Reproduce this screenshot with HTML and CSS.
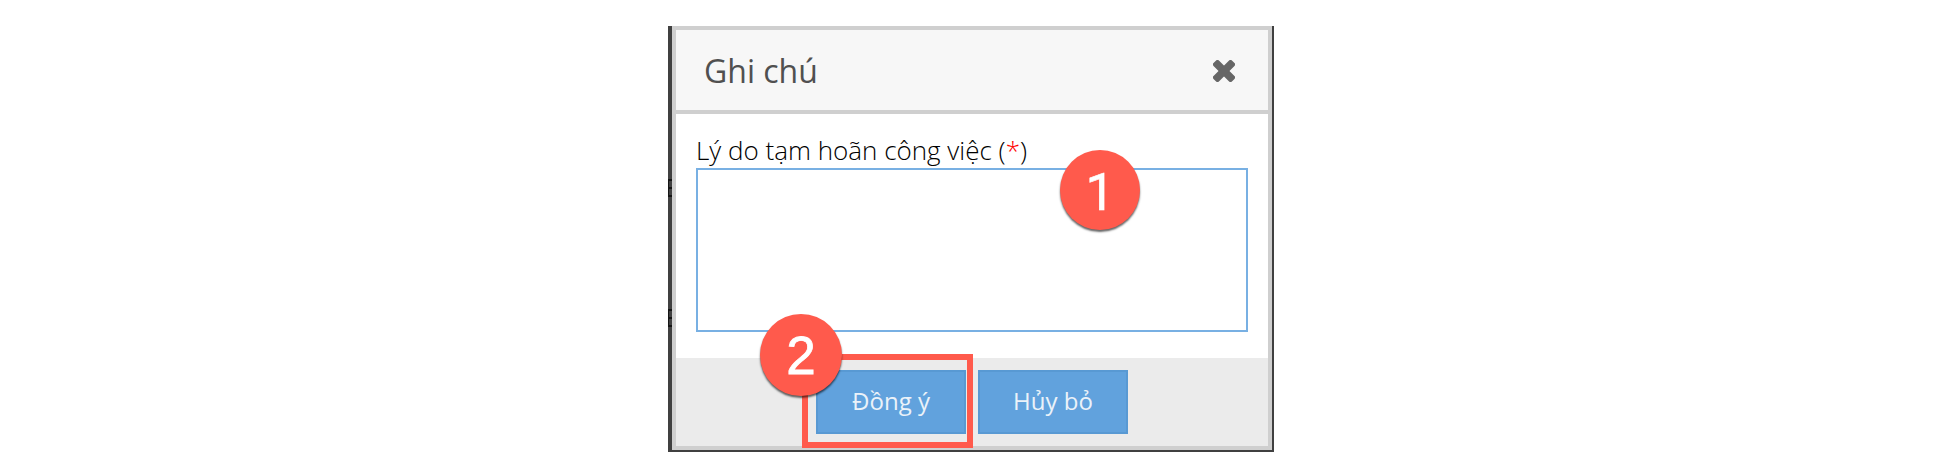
FILE: index.html
```html
<!DOCTYPE html>
<html lang="vi">
<head>
<meta charset="utf-8">
<title>Ghi chú</title>
<link rel="stylesheet" href="styles.css">
</head>
<body>
<div class="backdrop">
  <i class="notch notch-top"></i>
  <i class="notch notch-bottom"></i>
  <section class="dialog">
    <header class="dialog-header">
      <h1 class="title">Ghi chú</h1>
      <svg class="close" viewBox="-11 -11 22 22"><rect x="-13" y="-3.8" width="26" height="7.6" rx="2" transform="rotate(45)"/><rect x="-13" y="-3.8" width="26" height="7.6" rx="2" transform="rotate(-45)"/></svg>
    </header>
    <main class="dialog-body">
      <label class="label" for="reason">Lý do tạm hoãn công việc (<span class="required">*</span>)</label>
      <textarea class="reason" id="reason"></textarea>
    </main>
    <footer class="dialog-footer">
      <button class="button">Đồng ý</button>
      <button class="button">Hủy bỏ</button>
    </footer>
  </section>
  <div class="highlight"></div>
  <div class="step step-one"><span>1</span></div>
  <div class="step step-two"><span>2</span></div>
</div>
</body>
</html>
```
FILE: styles.css
```css
* { box-sizing: border-box; }
body {
  margin: 0;
  padding: 26px 0 0 668px;
  background: #fff;
  font-family: "Open Sans", "Noto Sans", sans-serif;
}
.backdrop {
  position: relative;
  width: 606px;
  height: 426px;
  padding: 0 2px 2px 4px;
  background: #404040;
}
.dialog {
  display: flex;
  flex-direction: column;
  height: 424px;
  border: 4px solid #cfcfcf;
  background: #fff;
}
.dialog-header {
  display: flex;
  align-items: center;
  justify-content: space-between;
  height: 84px;
  padding: 0 33px 0 28px;
  border-bottom: 4px solid #cfcfcf;
  background: #f7f7f7;
}
.title {
  margin: 1px 0 0;
  color: #505050;
  font-size: 32px;
  font-weight: 400;
  line-height: 44px;
}
.close {
  width: 22px;
  height: 22px;
  margin-top: 2px;
  fill: #666;
}
.dialog-body {
  display: flex;
  flex-direction: column;
  height: 244px;
  padding: 19px 20px 0;
}
.label {
  height: 35px;
  color: #000;
  font-size: 26px;
  font-weight: 300;
  line-height: 35px;
  white-space: nowrap;
}
.required { color: #f00; }
.reason {
  width: 552px;
  height: 164px;
  border: 2px solid #78b0e3;
  border-radius: 0;
  outline: 0;
  background: #fff;
  resize: none;
}
.dialog-footer {
  display: flex;
  justify-content: center;
  gap: 12px;
  height: 88px;
  padding-top: 12px;
  background: #ebebeb;
}
.button {
  width: 150px;
  height: 64px;
  padding: 0 0 2px;
  border: 2px solid #5899d3;
  background: #61a2dd;
  color: #ebf2f9;
  font: 400 24px/32px "Open Sans", sans-serif;
}
.highlight {
  position: absolute;
  left: 134px;
  top: 328px;
  width: 171px;
  height: 94px;
  border: 6px solid #ff5a4c;
}
.step {
  position: absolute;
  display: flex;
  align-items: center;
  justify-content: center;
  border-radius: 50%;
  background: #ff5a4c;
  box-shadow: 0 2px 2px rgba(0, 0, 0, .6);
  color: #fff;
}
.step-one {
  left: 392px;
  top: 124px;
  width: 80px;
  height: 80px;
  padding-top: 5px;
  font: 400 52px/60px Roboto, sans-serif;
  -webkit-text-stroke: .6px #fff;
}
.step-two {
  left: 92px;
  top: 288px;
  width: 82px;
  height: 82px;
  padding-top: 2px;
  font: 400 53px/60px "Liberation Sans", Arial, sans-serif;
  -webkit-text-stroke: .8px #fff;
}
.notch {
  position: absolute;
  left: 0;
  width: 4px;
  height: 18px;
  border: solid #151515;
  border-width: 2px 0 2px 1px;
  background: linear-gradient(#404040 6px, #151515 6px 8px, #404040 8px);
}
.notch-top { top: 153px; }
.notch-bottom { top: 283px; }
```
